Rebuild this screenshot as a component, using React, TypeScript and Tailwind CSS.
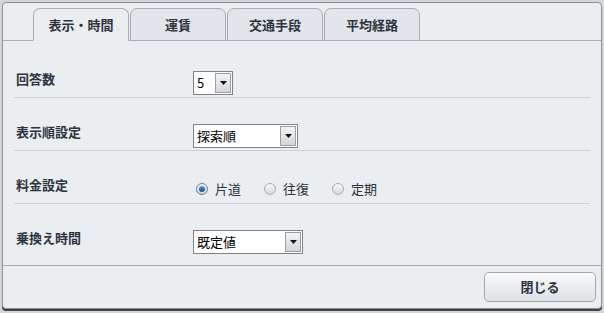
import React from "react";

const font = { fontFamily: '"Noto Sans CJK JP", "Noto Sans", sans-serif' };

function Select({ value, width }: { value: string; width: string }) {
  return (
    <div className={`flex h-[24px] ${width} border border-[#7d8287] bg-white`}>
      <div className="flex-1 pl-[3px] text-[13px] leading-[22px] text-black">{value}</div>
      <div className="m-px flex w-[16px] items-center justify-center border border-[#9a9ea3] bg-gradient-to-b from-[#f4f4f4] to-[#d3d5d8]">
        <svg width="7" height="4" viewBox="0 0 7 4">
          <path d="M0 0 H7 L3.5 4 Z" fill="#111" />
        </svg>
      </div>
    </div>
  );
}

function Radio({ checked, label }: { checked?: boolean; label: string }) {
  return (
    <div className="flex items-center gap-[7px]">
      <div
        className={`flex h-[12px] w-[12px] items-center justify-center rounded-full border ${
          checked ? "border-[#6d8094] bg-gradient-to-b from-[#f0f3f6] to-[#cfd6dd]" : "border-[#a9adb1] bg-gradient-to-b from-[#f7f7f7] to-[#d8dadc]"
        }`}
      >
        {checked && <div className="h-[6px] w-[6px] rounded-full bg-gradient-to-b from-[#4aa3dc] to-[#14528a]" />}
      </div>
      <span className="text-[13px] leading-[16px] text-[#2c3440]">{label}</span>
    </div>
  );
}

function Row({ label, children, first }: { label: string; children: React.ReactNode; first?: boolean }) {
  return (
    <div className={`mx-[11px] flex border-b border-[#cdd1d5] ${first ? "h-[57px] pt-[30px]" : "h-[53px] pt-[26px]"}`}>
      <div className="w-[179px] pl-[2px] text-[13px] font-bold leading-[16px] text-[#2c3440]">{label}</div>
      <div>{children}</div>
    </div>
  );
}

export default function App() {
  const tabs = ["表示・時間", "運賃", "交通手段", "平均経路"];
  return (
    <div className="h-[313px] w-[604px] bg-[#d3d6d9] pl-[2px] pr-[2px] pt-[2px]" style={font}>
      <div className="flex h-[307px] flex-col rounded-[4px] border border-[#8b9096] bg-[#eaeef1] shadow-[0_2px_0_#3c4248]">
        <div className="flex h-[38px] items-end gap-px border-b border-[#a7adb3] pl-[30px]">
          {tabs.map((t, i) => (
            <div
              key={t}
              className={`-mb-px flex h-[33px] w-[96px] items-center justify-center rounded-t-[7px] border border-[#a7adb3] text-[13px] font-bold text-[#2c3440] ${
                i === 0 ? "border-b-[#eaeef1] bg-[#eaeef1]" : "bg-[#e2e5e9]"
              }`}
            >
              {t}
            </div>
          ))}
        </div>
        <div className="flex-1">
          <Row label="回答数" first>
            <Select value="5" width="w-[40px]" />
          </Row>
          <Row label="表示順設定">
            <Select value="探索順" width="w-[105px]" />
          </Row>
          <Row label="料金設定">
            <div className="flex gap-[23px] pl-[3px] pt-[4px]">
              <Radio checked label="片道" />
              <Radio label="往復" />
              <Radio label="定期" />
            </div>
          </Row>
          <div className="mx-[11px] flex pt-[26px]">
            <div className="w-[179px] pl-[2px] text-[13px] font-bold leading-[16px] text-[#2c3440]">乗換え時間</div>
            <Select value="既定値" width="w-[110px]" />
          </div>
        </div>
        <div className="flex h-[43px] items-start justify-end border-t border-[#a2a8ae] pr-[5px] pt-[6px]">
          <button className="h-[30px] w-[112px] rounded-[5px] border border-[#a3a8ad] bg-gradient-to-b from-[#f9fafb] to-[#dde1e5] text-[13px] font-bold text-[#2c3440]">
            閉じる
          </button>
        </div>
      </div>
    </div>
  );
}
